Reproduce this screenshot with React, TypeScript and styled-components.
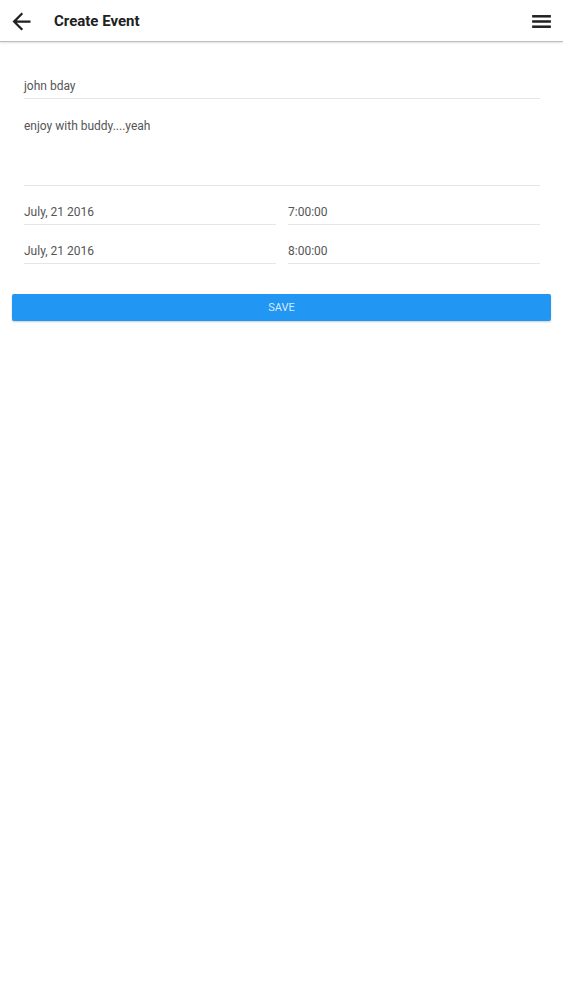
import { FC } from "react";
import styled, { createGlobalStyle } from "styled-components";

const GlobalStyle = createGlobalStyle`
    html, body {
        margin: 0;
        padding: 0;
        background-color: #fff;
        font-family: Roboto, "Liberation Sans", sans-serif;
    }
    * {
        box-sizing: border-box;
    }
`;

const BackIcon: FC = () => (
    <svg width="27" height="27" viewBox="0 0 24 24">
        <path fill="#212121" d="M20 11H7.83l5.59-5.59L12 4l-8 8 8 8 1.41-1.41L7.83 13H20v-2z" />
    </svg>
);

const MenuIcon: FC = () => (
    <svg width="25" height="25" viewBox="0 0 24 24">
        <rect x="3" y="5.8" width="18" height="2.4" fill="#212121" />
        <rect x="3" y="10.8" width="18" height="2.4" fill="#212121" />
        <rect x="3" y="15.8" width="18" height="2.4" fill="#212121" />
    </svg>
);

const App: FC = () => {
    return (
        <>
            <GlobalStyle />
            <Page>
                <TopBar>
                    <IconButton $left={8}>
                        <BackIcon />
                    </IconButton>
                    <Title>Create Event</Title>
                    <IconButton $right={9}>
                        <MenuIcon />
                    </IconButton>
                </TopBar>
                <Form>
                    <Field>john bday</Field>
                    <Description>enjoy with buddy....yeah</Description>
                    <Row>
                        <Field>July, 21 2016</Field>
                        <Field>7:00:00</Field>
                    </Row>
                    <Row>
                        <Field>July, 21 2016</Field>
                        <Field>8:00:00</Field>
                    </Row>
                </Form>
                <SaveButton>SAVE</SaveButton>
            </Page>
        </>
    );
};

export default App;

const Page = styled.main`
    width: 100%;
    min-height: 1000px;
    background-color: #fff;
`;

const TopBar = styled.header`
    height: 42px;
    display: flex;
    align-items: center;
    border-bottom: 1px solid #bdbdbd;
    box-shadow: 0 1px 2px rgba(0, 0, 0, 0.12);
`;

const IconButton = styled.div<{ $left?: number; $right?: number }>`
    display: flex;
    align-items: center;
    margin-left: ${(props) => (props.$left ? `${props.$left}px` : "auto")};
    margin-right: ${(props) => (props.$right ? `${props.$right}px` : "0")};
    margin-top: 1px;
`;

const Title = styled.h1`
    margin: 0 0 0 19px;
    font-size: 15px;
    font-weight: 700;
    color: #212121;
`;

const Form = styled.section`
    padding: 32px 23px 0 24px;
    display: flex;
    flex-direction: column;
    gap: 14px;
`;

const Field = styled.div`
    height: 25px;
    padding-top: 4px;
    font-size: 12px;
    line-height: 16px;
    color: #555;
    border-bottom: 1px solid #e6e6e6;
`;

const Description = styled(Field)`
    height: 68px;
    margin-top: 5px;
    padding-top: 0;
`;

const Row = styled.div`
    display: grid;
    grid-template-columns: 1fr 1fr;
    gap: 12px;
`;

const SaveButton = styled.button`
    display: block;
    width: calc(100% - 24px);
    height: 27px;
    margin: 30px 12px 0 12px;
    border: none;
    border-radius: 2px;
    background-color: #2196f3;
    box-shadow: 0 1px 2px rgba(0, 0, 0, 0.2);
    color: #d4e9fc;
    font-family: Roboto, "Liberation Sans", sans-serif;
    font-size: 11px;
    cursor: pointer;
`;
